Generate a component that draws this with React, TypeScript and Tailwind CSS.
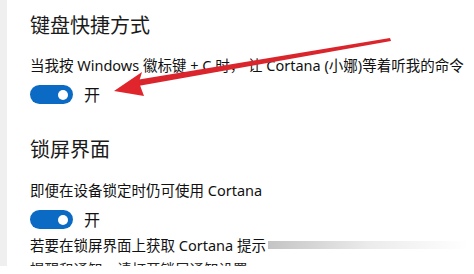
import React from 'react'

const font = { fontFamily: '"Noto Sans", "Noto Sans CJK SC", sans-serif' }

function Toggle() {
  return (
    <div className="flex items-center gap-[11px]">
      <div className="flex h-[19px] w-[43px] items-center justify-end rounded-full bg-[#0b6bc4] pr-[5px]">
        <div className="h-[10px] w-[10px] rounded-full bg-white" />
      </div>
      <span className="text-[16px] leading-none text-[#111]">开</span>
    </div>
  )
}

export default function App() {
  return (
    <div className="relative h-[274px] w-[474px] overflow-hidden bg-white" style={font}>
      <div className="flex h-[266px] overflow-hidden">
        <div className="w-[7px] shrink-0 bg-[#efefef]" />
        <div className="flex flex-1 flex-col pl-[23px] pt-[12px] text-[#111]">
          <h2 className="text-[20px] leading-[28px] text-[#1a1a1a]">键盘快捷方式</h2>
          <p className="mt-[15px] whitespace-nowrap text-[14.5px] leading-[20px]">
            当我按 Windows 徽标键 + C 时， 让 Cortana (小娜)等着听我的命令
          </p>
          <div className="mt-[10px]">
            <Toggle />
          </div>
          <h2 className="mt-[32px] text-[20px] leading-[28px] text-[#1a1a1a]">锁屏界面</h2>
          <p className="mt-[16px] whitespace-nowrap text-[14.5px] leading-[20px]">
            即便在设备锁定时仍可使用 Cortana
          </p>
          <div className="mt-[10px]">
            <Toggle />
          </div>
          <p className="mt-[6px] flex items-center whitespace-nowrap text-[14.5px] leading-[20px]">
            若要在锁屏界面上获取 Cortana 提示
            <span className="ml-[2px] h-[8px] w-[200px] bg-gradient-to-r from-[#c4c4c4] via-[#ebebeb] to-transparent" />
          </p>
          <p className="mt-[4px] whitespace-nowrap text-[14.5px] leading-[20px] text-[#222]">
            提醒和通知，请打开锁屏通知设置
          </p>
        </div>
      </div>
      <svg className="pointer-events-none absolute left-0 top-0" width="474" height="274" viewBox="0 0 474 274">
        <polygon points="390,38 391,41 138,86 136,80" fill="#d9252b" />
        <polygon points="114,91 142,72 139,82 141,88 144,96" fill="#e0262c" />
      </svg>
    </div>
  )
}
